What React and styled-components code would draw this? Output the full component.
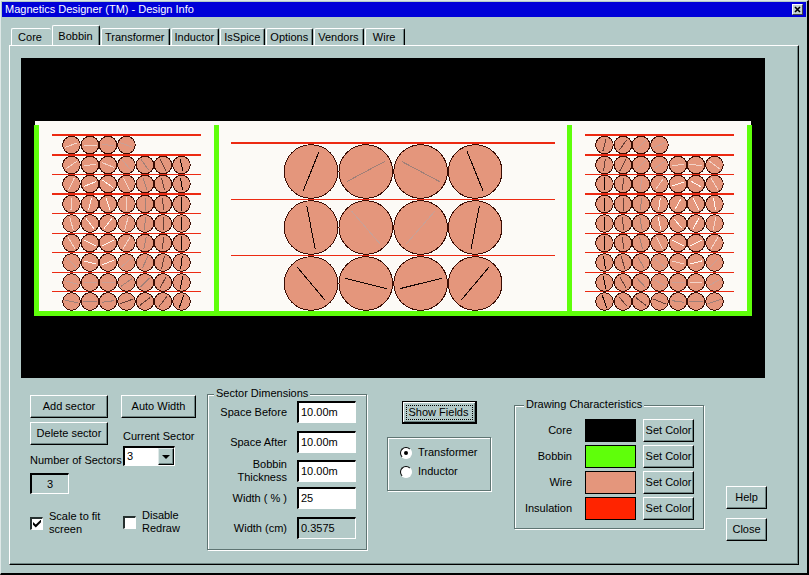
import React, { useState } from "react";
import styled, { createGlobalStyle } from "styled-components";

const GlobalStyle = createGlobalStyle`
  * {
    box-sizing: border-box;
  }
  body {
    margin: 0;
    background: #b3cac8;
  }
  body,
  button,
  input,
  select {
    font-family: "Liberation Sans", Arial, sans-serif;
    font-size: 11px;
    line-height: 13px;
    color: #000;
  }
`;

const Window = styled.div`
  display: flex;
  flex-direction: column;
  min-height: 100vh;
  padding: 1px;
  background: #b3cac8;
  border: 1px solid #dfe9e8;
  border-right: 2px solid #000;
  border-bottom: 2px solid #000;
`;

const TitleBar = styled.header`
  display: flex;
  align-items: center;
  justify-content: space-between;
  height: 15px;
  padding: 0 3px;
  background: #0000d8;
  color: #fff;

  h1 {
    margin: 0;
    font-size: 11px;
    font-weight: normal;
  }
  button {
    display: flex;
    align-items: center;
    justify-content: center;
    width: 11px;
    height: 11px;
    padding: 0;
    background: #c3d2d0;
    border: 1px solid #fff;
    border-right-color: #444;
    border-bottom-color: #444;
  }
`;

const Tabs = styled.div`
  display: flex;
  align-items: flex-end;
  gap: 1px;
  padding: 8px 9px 0;
`;

const Tab = styled.button`
  height: ${(p) => (p.$active ? 21 : 17)}px;
  margin-bottom: ${(p) => (p.$active ? -1 : 0)}px;
  min-width: ${(p) => (p.$active ? 48 : 40)}px;
  padding: 0 ${(p) => (p.$line ? 4 : 8)}px 0 ${(p) => (p.$line ? 3 : 5)}px;
  background: #b3cac8;
  border: 0 solid #fff;
  border-top-width: 1px;
  border-left-width: 1px;
  border-right: ${(p) => (p.$line ? "1px solid #000" : "0")};
  box-shadow: ${(p) => (p.$line ? "inset -1px 0 0 #6f8583" : "none")};
  border-radius: 2px 2px 0 0;
`;

const Panel = styled.main`
  flex: 1;
  margin: 0 7px 7px;
  padding: 12px 0 0 11px;
  border: 1px solid #fff;
  border-right: 1px solid #000;
  border-bottom: 1px solid #000;
  box-shadow: inset -1px -1px 0 #6f8583;
`;

const Canvas = styled.div`
  margin-right: 33px;
`;

const Drawing = styled.svg`
  display: block;
  width: 100%;
  height: auto;
  background: #000;
`;

const Controls = styled.div`
  display: flex;
  flex-wrap: wrap;
  align-items: flex-start;
  padding: 9px 0 13px 9px;
`;

const Column = styled.div`
  display: flex;
  flex-direction: column;
  align-items: ${(p) => (p.$center ? "center" : "flex-start")};
  width: ${(p) => p.$width}px;
  margin-right: ${(p) => p.$after || 0}px;
  padding-top: ${(p) => p.$top}px;
`;

const Indent = styled.div`
  padding-left: 2px;
`;

const Button = styled.button`
  width: ${(p) => p.$width}px;
  height: 23px;
  margin-bottom: ${(p) => p.$after || 0}px;
  padding: 0;
  white-space: nowrap;
  background: #b3cac8;
  border: 1px solid #fff;
  border-right-color: #000;
  border-bottom-color: #000;
  box-shadow: inset -1px -1px 0 #6f8583;
`;

const DefaultButton = styled(Button)`
  border: 1px solid #000;
  border-right-width: 2px;
  border-bottom-width: 2px;
  box-shadow: inset 1px 1px 0 #fff, inset -1px -1px 0 #6f8583;
  outline: 1px dotted #000;
  outline-offset: -5px;
`;

const Caption = styled.label`
  display: block;
  margin-bottom: ${(p) => p.$after}px;
  white-space: nowrap;
`;

const Field = styled.input`
  width: ${(p) => p.$width}px;
  height: ${(p) => p.$height || 22}px;
  padding: ${(p) => (p.$center ? "0" : "0 2px 2px")};
  text-align: ${(p) => (p.$center ? "center" : "left")};
  background: ${(p) => (p.readOnly ? "#b3cac8" : "#fff")};
  border: 1px solid #fff;
  border-top: 2px solid #000;
  border-left: 2px solid #000;
  border-radius: 0;
  outline: none;
`;

const SelectBox = styled.div`
  position: relative;
  width: 52px;
  height: 20px;

  select {
    appearance: none;
    width: 100%;
    height: 100%;
    padding: 0 2px;
    background: #fff;
    border: 1px solid #fff;
    border-top: 2px solid #000;
    border-left: 2px solid #000;
    border-radius: 0;
  }
  span {
    position: absolute;
    top: 2px;
    right: 1px;
    bottom: 1px;
    display: flex;
    align-items: center;
    justify-content: center;
    width: 16px;
    background: #b3cac8;
    border: 1px solid #dfe9e8;
    border-right-color: #000;
    border-bottom-color: #000;
    box-shadow: inset -1px -1px 0 #6f8583;
    pointer-events: none;
  }
`;

const Option = styled.label`
  display: flex;
  align-items: center;
  gap: 6px;
  min-height: 19px;
`;

const Checkbox = styled.input`
  appearance: none;
  display: grid;
  place-items: center;
  flex: none;
  width: 13px;
  height: 13px;
  margin: 0;
  background: #fff;
  border: 1px solid #fff;
  border-top: 2px solid #26302f;
  border-left: 2px solid #26302f;

  &:checked::before {
    content: "";
    width: 8px;
    height: 8px;
    background: #000;
    clip-path: polygon(0 30%, 35% 62%, 100% 0, 100% 34%, 35% 100%, 0 66%);
  }
`;

const Radio = styled.input`
  appearance: none;
  display: grid;
  place-items: center;
  flex: none;
  width: 12px;
  height: 12px;
  margin: 0;
  background: #fff;
  border: 1px solid #fff;
  border-top-color: #000;
  border-left-color: #000;
  border-radius: 50%;

  &:checked::before {
    content: "";
    width: 4px;
    height: 4px;
    background: #000;
    border-radius: 50%;
  }
`;

const Group = styled.fieldset`
  width: ${(p) => p.$width}px;
  min-width: 0;
  margin: ${(p) => p.$top || 0}px ${(p) => p.$after || 0}px 0 0;
  padding: ${(p) => p.$padding};
  border: 1px solid #5f7573;
  box-shadow: 1px 1px 0 #fff, inset 1px 1px 0 #fff;

  legend {
    height: 14px;
    padding: 0 2px;
    background: #b3cac8;
  }
`;

const SizeRow = styled.div`
  display: flex;
  align-items: center;
  justify-content: flex-end;
  gap: 10px;
  height: 22px;
  margin-bottom: ${(p) => p.$after || 7}px;
  text-align: right;
  white-space: pre-line;
`;

const ColorRow = styled.div`
  display: grid;
  grid-template-columns: 54px 51px 51px;
  column-gap: 7px;
  align-items: center;
  height: 23px;
  margin-bottom: 3px;

  span {
    padding-right: 6px;
    text-align: right;
  }
`;

const Swatch = styled.div`
  height: 23px;
  background: ${(p) => p.$color};
  border: 1px solid #000;
`;

const TABS = ["Core", "Bobbin", "Transformer", "Inductor", "IsSpice", "Options", "Vendors", "Wire"];

const COLORS = [
  ["Core", "#000000"],
  ["Bobbin", "#5fff0a"],
  ["Wire", "#e4967c"],
  ["Insulation", "#ff2400"],
];

// shade letters used by the turn marks below
const SHADES = { w: "#fff6f0", l: "#f3d3c8", f: "#c9a096", g: "#a08078", d: "#643e36", b: "#140503" };

// one entry per turn: shade letter, then the angle of its mark
const LEFT_TURNS = [
  "l20 l0 f-10 f-20",
  "l35 l5 l-22 f-50 g-55 d-62 b-75",
  "l65 w22 w-35 l-62 g-72 d-75 b-80",
  "l85 w75 w-72 l-87 g-90 d-88 b-86",
  "l-75 w-52 w52 l75 g88 d90 b90",
  "l-60 w-25 w25 l60 g78 d83 b87",
  "f-48 w-12 w20 f42 g65 d77 b83",
  "f-15 f0 f0 g35 g45 d62 b80",
  "g-12 g-3 g8 d20 d37 d52 b70",
];

const RIGHT_TURNS = [
  "d75 d55 f45 f25",
  "d82 d62 f45 f35 l5 l-8 l-38",
  "b88 d80 f80 l55 w18 w-30 l-60",
  "b90 d90 g85 w82 w60 w-65 w-80",
  "b-87 d-87 g-80 w-77 w-50 w62 l78",
  "b-86 d-80 g-75 l-62 w-25 w25 l60",
  "b-82 d-73 g-60 f-40 l-12 w15 f45",
  "b-77 d-60 g-47 f-30 f0 l5 f30",
  "b-70 d-50 d-37 d-22 g-8 g3 g18",
];

const CENTER_TURNS = ["b68 g28 g-28 b-68", "b-79 f-49 f49 b79", "b-50 b-14 b14 b50"];

const SMALL_X = [0, 18.5, 36.5, 55, 73.5, 91.5, 110];
const SMALL_Y = [87, 107, 126, 146, 165.5, 185, 204.5, 224.5, 243.5];
const SMALL_LINES = [
  [76, 2],
  [96, 2],
  [116, 1],
  [135, 2],
  [155, 1],
  [175, 1],
  [194, 1],
  [214, 1],
  [233, 1],
];
const CENTER_LINES = [
  [84, 2],
  [141, 1],
  [197, 1],
];

function Insulation({ x, width, lines }) {
  return lines.map(([y, h]) => (
    <rect key={y} x={x} y={y} width={width} height={h} fill="#ec2a12" shapeRendering="crispEdges" />
  ));
}

function Turns({ rows, xs, ys, r, mark }) {
  return rows.map((row, j) =>
    row.split(" ").map((turn, i) => {
      const angle = (Number(turn.slice(1)) * Math.PI) / 180;
      const dx = Math.cos(angle) * mark;
      const dy = -Math.sin(angle) * mark;
      return (
        <g key={`${j}-${i}`} shapeRendering="crispEdges">
          <circle cx={xs[i]} cy={ys[j]} r={r} fill="#e4967c" stroke="#3a0d04" />
          <line
            x1={xs[i] - dx}
            y1={ys[j] - dy}
            x2={xs[i] + dx}
            y2={ys[j] + dy}
            stroke={SHADES[turn[0]]}
          />
        </g>
      );
    })
  );
}

function SideWinding({ x, rows }) {
  return (
    <>
      <Insulation x={x} width={149} lines={SMALL_LINES} />
      <Turns rows={rows} xs={SMALL_X.map((v) => v + x + 19.5)} ys={SMALL_Y} r={8.8} mark={6.5} />
    </>
  );
}

function BobbinDrawing() {
  return (
    <Drawing viewBox="0 0 744 320" role="img" aria-label="Bobbin cross section">
      <rect x="14" y="63" width="716" height="192" fill="#fcfaf6" />
      <SideWinding x={31} rows={LEFT_TURNS} />
      <Insulation x={210} width={324} lines={CENTER_LINES} />
      <Turns rows={CENTER_TURNS} xs={[290, 344.8, 399.6, 454.2]} ys={[113.5, 169.5, 225.5]} r={26.8} mark={21.5} />
      <SideWinding x={564} rows={RIGHT_TURNS} />
      <g fill="#5fff0a">
        <rect x="13" y="67" width="5" height="191" />
        <rect x="193" y="67" width="5" height="188" />
        <rect x="546" y="67" width="5" height="188" />
        <rect x="726" y="67" width="5" height="191" />
        <rect x="13" y="253" width="718" height="5" />
      </g>
    </Drawing>
  );
}

function SizeField({ id, label, value, after, readOnly }) {
  return (
    <SizeRow $after={after}>
      <label htmlFor={id}>{label}</label>
      <Field id={id} $width={59} defaultValue={value} readOnly={readOnly} />
    </SizeRow>
  );
}

export default function App() {
  const [tab, setTab] = useState("Bobbin");

  return (
    <>
      <GlobalStyle />
      <Window>
        <TitleBar>
          <h1>Magnetics Designer (TM) - Design Info</h1>
          <button aria-label="Close window">
            <svg width="7" height="7" viewBox="0 0 7 7" stroke="#000" strokeWidth="1.6">
              <path d="M1 1l5 5M6 1l-5 5" />
            </svg>
          </button>
        </TitleBar>

        <Tabs role="tablist">
          {TABS.map((name, i) => (
            <Tab
              key={name}
              role="tab"
              aria-selected={tab === name}
              $active={tab === name}
              $line={i > 0}
              onClick={() => setTab(name)}
            >
              {name}
            </Tab>
          ))}
        </Tabs>

        <Panel>
          <Canvas>
            <BobbinDrawing />
          </Canvas>

          <Controls>
            <Column $width={91} $top={8}>
              <Button $width={78} $after={4}>Add sector</Button>
              <Button $width={78} $after={9}>Delete sector</Button>
              <Caption htmlFor="count" $after={6}>Number of Sectors</Caption>
              <Field id="count" $width={39} $height={21} $center defaultValue="3" readOnly />
              <Column $width={91} $top={16}>
                <Option>
                  <Checkbox type="checkbox" defaultChecked />
                  <span>Scale to fit<br />screen</span>
                </Option>
              </Column>
            </Column>

            <Column $width={75} $top={8} $after={11}>
              <Button $width={75} $after={12}>Auto Width</Button>
              <Indent>
                <Caption htmlFor="current" $after={3}>Current Sector</Caption>
                <SelectBox>
                  <select id="current" defaultValue="3">
                    <option>1</option>
                    <option>2</option>
                    <option>3</option>
                  </select>
                  <span>
                    <svg width="8" height="4" viewBox="0 0 8 4">
                      <path d="M0 0h8L4 4z" />
                    </svg>
                  </span>
                </SelectBox>
              </Indent>
              <Column $width={75} $top={43}>
                <Indent>
                  <Option>
                    <Checkbox type="checkbox" />
                    <span>Disable<br />Redraw</span>
                  </Option>
                </Indent>
              </Column>
            </Column>

            <Group $width={160} $after={20} $padding="0 10px 3px 6px">
              <legend>Sector Dimensions</legend>
              <SizeField id="before" label="Space Before" value="10.00m" after={8} />
              <SizeField id="after" label="Space After" value="10.00m" />
              <SizeField id="thickness" label={"Bobbin\nThickness"} value="10.00m" after={5} />
              <SizeField id="percent" label="Width ( % )" value="25" after={8} />
              <SizeField id="cm" label="Width (cm)" value="0.3575" readOnly />
            </Group>

            <Column $width={104} $top={14} $after={23} $center>
              <DefaultButton $width={75} $after={13}>Show Fields</DefaultButton>
              <Group as="div" role="radiogroup" aria-label="Device" $width={104} $padding="5px 12px 9px">
                <Option>
                  <Radio type="radio" name="device" defaultChecked />
                  Transformer
                </Option>
                <Option>
                  <Radio type="radio" name="device" />
                  Inductor
                </Option>
              </Group>
            </Column>

            <Group $width={190} $top={11} $after={22} $padding="7px 9px 5px">
              <legend>Drawing Characteristics</legend>
              {COLORS.map(([name, color]) => (
                <ColorRow key={name}>
                  <span>{name}</span>
                  <Swatch $color={color} />
                  <Button $width={51}>Set Color</Button>
                </ColorRow>
              ))}
            </Group>

            <Column $width={41} $top={99}>
              <Button $width={41} $after={9}>Help</Button>
              <Button $width={41}>Close</Button>
            </Column>
          </Controls>
        </Panel>
      </Window>
    </>
  );
}
